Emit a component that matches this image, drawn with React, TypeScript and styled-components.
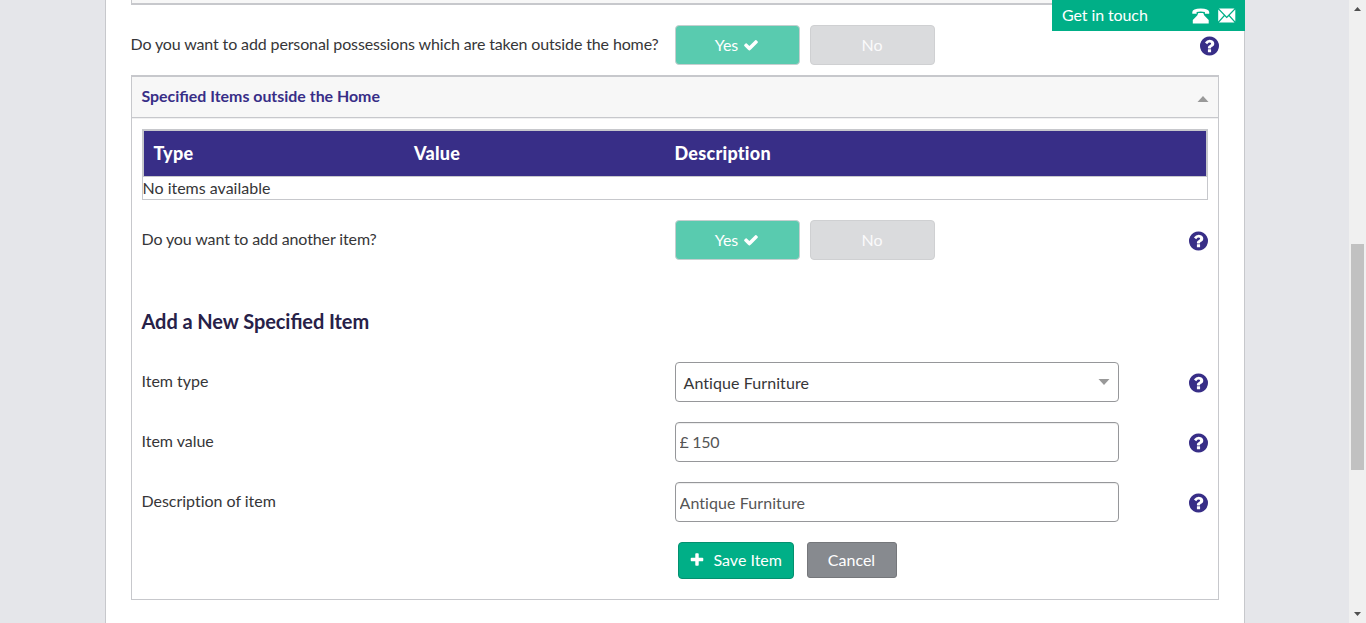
import React from "react";
import styled, { createGlobalStyle } from "styled-components";

const Global = createGlobalStyle`
  * { box-sizing: border-box; }
  body { margin: 0; overflow: hidden; background: #e5e6ea; }
  body, button, input {
    font-family: Lato, "Liberation Sans", sans-serif;
    font-size: 16px;
    font-variant-ligatures: none;
  }
`;

const Screen = styled.div`
  display: flex;
  width: 1366px;
  height: 623px;
  overflow: hidden;
  color: #363638;
  line-height: 20px;
`;
const Backdrop = styled.div`
  flex: 1;
  display: flex;
  justify-content: center;
  padding-left: 1px;
  background: #e5e6ea;
`;
const Sheet = styled.main`
  position: relative;
  width: 1140px;
  height: 623px;
  padding: 0 25px;
  background: #fff;
  border: solid #c7c8cc;
  border-width: 0 1px;
`;
const PreviousPanel = styled.div`
  height: 5px;
  background: #f7f7f7;
  border: 1px solid #c7c8cc;
  border-width: 0 1px 2px;
`;
const Contact = styled.div`
  position: absolute;
  top: 0;
  right: -1px;
  width: 193px;
  height: 31px;
  padding: 0 9px 0 10px;
  display: flex;
  align-items: center;
  background: #00af87;
  color: #fff;
`;
const ContactLabel = styled.span`
  flex: 1;
  padding-bottom: 1px;
  letter-spacing: -0.1px;
`;
const ContactIcon = styled.svg`
  width: 18px;
  height: 16px;
  margin-left: 8px;
`;

const Row = styled.div<{ $outer?: boolean }>`
  display: grid;
  grid-template-columns: ${p => (p.$outer ? 544 : 533)}px 444px 1fr;
  height: ${p => (p.$outer ? 70 : 60)}px;
  padding-top: ${p => (p.$outer ? 20 : 0)}px;
`;
const Label = styled.label<{ $tracking?: number }>`
  padding-top: 9px;
  margin-left: -0.5px;
  white-space: nowrap;
  letter-spacing: ${p => p.$tracking ?? -0.02}px;
`;
const Choices = styled.div`
  display: flex;
  gap: 10px;
`;
const Choice = styled.button<{ $on?: boolean }>`
  width: 125px;
  height: 40px;
  padding: 0 1px 1px 0;
  display: flex;
  align-items: center;
  justify-content: center;
  gap: 5px;
  border: 1px solid ${p => (p.$on ? "#c5cfcf" : "#cfd0d2")};
  border-radius: 4px;
  background: ${p => (p.$on ? "#59cbaf" : "#dadbdd")};
  color: ${p => (p.$on ? "#fff" : "#fafafb")};
`;
const HelpSlot = styled.div`
  display: flex;
  justify-content: flex-end;
  padding-top: 11px;
`;
const HelpIcon = styled.svg`
  width: 20px;
  height: 20px;
  fill: #382e87;
`;

const Panel = styled.section`
  height: 525px;
  border: 1px solid #c7c8cc;
  border-top-width: 2px;
`;
const PanelHeader = styled.header`
  height: 41px;
  padding: 0 9px 2px 9.5px;
  display: flex;
  align-items: center;
  justify-content: space-between;
  background: #f7f7f7;
  border-bottom: 1px solid #c7c8cc;
  box-shadow: 0 1px 0 #f0f0f1;
  color: #382e87;
  font-size: 15.920px;
  font-weight: 700;
  font-variant-ligatures: normal;
`;
const Triangle = styled.svg`
  width: 12px;
  height: 6px;
  fill: #999;
`;
const HeaderTriangle = styled(Triangle)`
  margin-top: 5px;
`;
const PanelBody = styled.div`
  padding: 11px 10px 0;
`;

const Items = styled.div`
  height: 71px;
  margin-bottom: 20px;
`;
const ItemsHead = styled.div`
  display: grid;
  grid-template-columns: 260.5px 260.5px 1fr;
  height: 47px;
  padding: 0 9.5px 2px;
  align-items: center;
  background: #382e87;
  border: 2px solid #c7c8cc;
  border-bottom: 0;
  color: #fff;
  font-size: 18px;
  font-weight: 900;
  letter-spacing: 0.25px;
`;
const ItemsEmpty = styled.div`
  height: 24px;
  padding-top: 1px;
  border: 1px solid #c7c8cc;
  text-indent: -0.5px;
`;

const Heading = styled.h2`
  height: 82px;
  margin: 0 0 0 -0.5px;
  padding-top: 29px;
  color: #272148;
  font-size: 20px;
  line-height: 24px;
  font-weight: 700;
  letter-spacing: -0.07px;
  font-variant-ligatures: normal;
  font-feature-settings: "liga" 1;
`;

const fieldBox = `
  width: 444px;
  height: 40px;
  border: 1px solid #96979a;
  border-radius: 4px;
  background: #fff;
`;
const Select = styled.div`
  ${fieldBox}
  display: flex;
  align-items: center;
  justify-content: space-between;
  padding: 2px 8px 0 7.500px;
  letter-spacing: 0.08px;
`;
const SelectArrow = styled(Triangle)`
  margin-top: -3px;
`;
const Field = styled.input<{ $amount?: boolean }>`
  ${fieldBox}
  padding: 0 3.500px ${p => (p.$amount ? 2 : 0)}px;
  color: #555;
  letter-spacing: ${p => (p.$amount ? -0.3 : 0.08)}px;
  box-shadow: inset 0 1px 1px rgba(0, 0, 0, 0.075);
`;

const Actions = styled.div`
  display: flex;
  align-items: flex-start;
  gap: 13px;
  padding-left: 536px;
`;
const Action = styled.button<{ $primary?: boolean }>`
  width: ${p => (p.$primary ? 116 : 90)}px;
  height: ${p => (p.$primary ? 37 : 36)}px;
  padding: 0 1px ${p => (p.$primary ? 2 : 1)}px 0;
  display: flex;
  align-items: center;
  justify-content: center;
  gap: 8.500px;
  border: 1px solid ${p => (p.$primary ? "#03906f" : "#75777b")};
  border-radius: ${p => (p.$primary ? 4 : 3)}px;
  background: ${p => (p.$primary ? "#00af87" : "#878a8f")};
  color: #fff;
`;
const Glyph = styled.svg`
  width: 16px;
  height: 16px;
  fill: #fff;
`;

const Scrollbar = styled.div`
  width: 17px;
  display: flex;
  flex-direction: column;
  align-items: center;
  background: #f0f0f0;
`;
const ScrollArrow = styled.svg`
  flex: none;
  width: 17px;
  height: 17px;
  fill: #505050;
`;
const Thumb = styled.div`
  width: 13px;
  height: 226px;
  margin: 227px 2px 136px;
  background: #c1c1c1;
`;

const Help = () => (
  <HelpSlot>
    <HelpIcon viewBox="48 88 1616 1616">
      <path d="M1024 1376v-192q0-14-9-23t-23-9h-192q-14 0-23 9t-9 23v192q0 14 9 23t23 9h192q14 0 23-9t9-23zm256-672q0-88-55.500-163t-138.500-116-170-41q-243 0-371 213-15 24 8 42l132 100q7 6 19 6 16 0 25-12 53-68 86-92 34-24 86-24 48 0 85.500 26t37.500 59q0 38-20 61t-68 45q-63 28-115.500 86.500t-52.500 125.500v36q0 14 9 23t23 9h192q14 0 23-9t9-23q0-19 21.500-49.500t54.500-49.500q32-18 49-28.500t46-35 44.500-48 28-60.500 12.500-81zm384 192q0 209-103 385.500t-279.500 279.500-385.500 103-385.500-103-279.500-279.500-103-385.500 103-385.500 279.500-279.500 385.500-103 385.500 103 279.500 279.500 103 385.500z" />
    </HelpIcon>
  </HelpSlot>
);

const YesNo = () => (
  <Choices>
    <Choice $on>
      Yes
      <Glyph viewBox="0 0 1792 1792">
        <path d="M1671 566q0 40-28 68l-724 724-136 136q-28 28-68 28t-68-28l-136-136-362-362q-28-28-28-68t28-68l136-136q28-28 68-28t68 28l294 295 656-657q28-28 68-28t68 28l136 136q28 28 28 68z" />
      </Glyph>
    </Choice>
    <Choice>No</Choice>
  </Choices>
);

export default function App() {
  return (
    <Screen>
      <Global />
      <Backdrop>
        <Sheet>
          <PreviousPanel />
          <Contact>
            <ContactLabel>Get in touch</ContactLabel>
            <ContactIcon viewBox="0 0 18 16" fill="#fff">
              <path d="M0.300 5.800V4Q0.500 0.500 8.700 0.500T17.200 4V5.800H12.900V4Q8.700 2.900 4.600 4V5.800Z" />
              <path d="M6.300 5H11.200L12.300 7.500L16.700 12V15.500H0.800V12L5.200 7.500Z" />
            </ContactIcon>
            <ContactIcon viewBox="0 0 18 16" fill="#fff">
              <path d="M1 0.500H16.500L8.700 8.500ZM0.200 1.500L5.800 7.300L0.200 13.500ZM17.300 1.500L11.700 7.300L17.300 13.500ZM1 14.500L6.600 8.300L8.700 10.300L10.900 8.300L16.500 14.500Z" />
            </ContactIcon>
          </Contact>
          <Row $outer>
            <Label $tracking={-0.13}>
              Do you want to add personal possessions which are taken outside the home?
            </Label>
            <YesNo />
            <Help />
          </Row>
          <Panel>
            <PanelHeader>
              Specified Items outside the Home
              <HeaderTriangle viewBox="0 0 12 6"><path d="M6 0L11.500 6H0.500Z" /></HeaderTriangle>
            </PanelHeader>
            <PanelBody>
              <Items>
                <ItemsHead>
                  <span>Type</span>
                  <span>Value</span>
                  <span>Description</span>
                </ItemsHead>
                <ItemsEmpty>No items available</ItemsEmpty>
              </Items>
              <Row>
                <Label $tracking={-0.12}>Do you want to add another item?</Label>
                <YesNo />
                <Help />
              </Row>
              <Heading>Add a New Specified Item</Heading>
              <Row>
                <Label>Item type</Label>
                <Select>
                  Antique Furniture
                  <SelectArrow viewBox="0 0 12 6"><path d="M0.500 0H11.500L6 6Z" /></SelectArrow>
                </Select>
                <Help />
              </Row>
              <Row>
                <Label>Item value</Label>
                <Field defaultValue="£ 150" $amount />
                <Help />
              </Row>
              <Row>
                <Label>Description of item</Label>
                <Field defaultValue="Antique Furniture" />
                <Help />
              </Row>
              <Actions>
                <Action $primary>
                  <Glyph viewBox="0 0 1792 1792">
                    <path d="M1600 736v192q0 40-28 68t-68 28h-416v416q0 40-28 68t-68 28h-192q-40 0-68-28t-28-68v-416h-416q-40 0-68-28t-28-68v-192q0-40 28-68t68-28h416v-416q0-40 28-68t68-28h192q40 0 68 28t28 68v416h416q40 0 68 28t28 68z" />
                  </Glyph>
                  Save Item
                </Action>
                <Action>Cancel</Action>
              </Actions>
            </PanelBody>
          </Panel>
        </Sheet>
      </Backdrop>
      <Scrollbar>
        <ScrollArrow viewBox="0 0 17 17"><path d="M8.500 7L12 11H5Z" /></ScrollArrow>
        <Thumb />
        <ScrollArrow viewBox="0 0 17 17"><path d="M5 6H12L8.500 10Z" /></ScrollArrow>
      </Scrollbar>
    </Screen>
  );
}
